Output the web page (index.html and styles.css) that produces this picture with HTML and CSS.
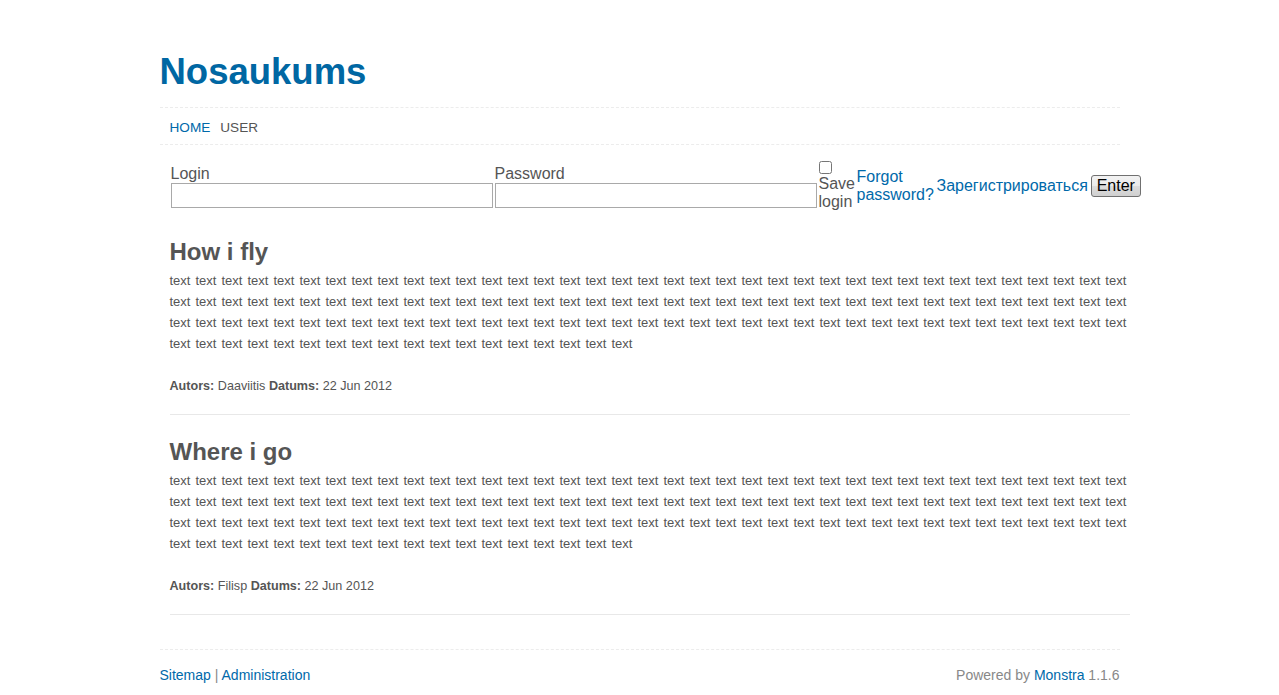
FILE: index.html
```html
<!doctype html>
<html>

	<head>
		<meta charset="UTF-8">
		<title>Nosaukums</title>
		<link rel="stylesheet" href="styles.css">
	</head>

	<body>
		<div class="wrap">
			<h1 class="logo"><a href="#">Nosaukums</a></h1>
			<ul class="nav">
				<li><a href="#">HOME</a></li>
				<li class="current">USER</li>
			</ul>

			<form class="login" action="#">
				<div class="field">
					<label>Login</label>
					<input type="text">
				</div>
				<div class="field">
					<label>Password</label>
					<input type="password">
				</div>
				<div class="remember">
					<input type="checkbox">
					Save login
				</div>
				<a class="forgot" href="#">Forgot password?</a>
				<a class="reg" href="#">Зарегистрироваться</a>
				<button type="button" class="btn">Enter</button>
			</form>

			<div class="content">
				<div class="post">
					<h2>How i fly</h2>
					<p>
						text text text text text text text text text text
						text text text text text text text text text text
						text text text text text text text text text text
						text text text text text text text text text text
						text text text text text text text text text text
						text text text text text text text text text text
						text text text text text text text text text text
						text text text text text text text text text text
						text text text text text text text text text text
						text text text text text text text text text text
						text text text text text text text text text text
						text text text text text text text text text text
						text text text text text text text text text
					</p>
					<div class="meta"><b>Autors:</b> Daaviitis <b>Datums:</b> 22 Jun 2012</div>
				</div>
				<div class="post">
					<h2>Where i go</h2>
					<p>
						text text text text text text text text text text
						text text text text text text text text text text
						text text text text text text text text text text
						text text text text text text text text text text
						text text text text text text text text text text
						text text text text text text text text text text
						text text text text text text text text text text
						text text text text text text text text text text
						text text text text text text text text text text
						text text text text text text text text text text
						text text text text text text text text text text
						text text text text text text text text text text
						text text text text text text text text text
					</p>
					<div class="meta"><b>Autors:</b> Filisp <b>Datums:</b> 22 Jun 2012</div>
				</div>
			</div>

			<div class="footer">
				<div class="links"><a href="#">Sitemap</a> | <a href="#">Administration</a></div>
				<div class="powered">Powered by <a href="#">Monstra</a> 1.1.6</div>
			</div>
		</div>
	</body>

</html>
```

FILE: styles.css
```css
* {
	margin: 0;
	padding: 0;
}

body {
	font-family: "Liberation Sans", Arial, sans-serif;
	color: #555;
	background: #fff;
}

a {
	color: #0069aa;
	text-decoration: none;
}

li {
	list-style: none;
}

.wrap {
	width: 960px;
	margin: 0 auto;
}

/* 头部 */
.logo {
	margin-top: 52px;
	font-size: 36.5px;
	line-height: 40px;
	font-weight: bold;
}

.logo a {
	color: #0067a3;
}

.nav {
	display: flex;
	gap: 10px;
	margin-top: 15px;
	padding: 11px 10px 7px;
	border-top: 1px dashed #ececec;
	border-bottom: 1px dashed #ececec;
	font-size: 13.6px;
	line-height: 18px;
}

.nav .current {
	color: #555;
}

/* 登录表单 */
.login {
	display: flex;
	align-items: center;
	gap: 2px;
	height: 54px;
	margin-top: 14px;
	padding-left: 11px;
	font-size: 16px;
	line-height: 18px;
	white-space: nowrap;
}

.login > * {
	flex-shrink: 0;
}

.field label {
	display: block;
	line-height: 19px;
}

.field input {
	display: block;
	width: 322px;
	height: 25px;
	box-sizing: border-box;
	border: 1px solid #a9a9a9;
	font-size: 13px;
	padding: 1px 2px;
}

.remember {
	width: 36px;
	white-space: normal;
}

.remember input {
	display: block;
	width: 13px;
	height: 13px;
	margin: 0 0 1px;
}

.forgot {
	width: 78px;
	white-space: normal;
}

.btn {
	width: 50px;
	height: 22px;
	margin-left: 1px;
	border: 1px solid #707070;
	border-radius: 3px;
	background: linear-gradient(#f2f2f2 0%, #ebebeb 50%, #dddddd 51%, #cfcfcf 100%);
	color: #000;
	font-family: "Liberation Sans", Arial, sans-serif;
	font-size: 16px;
	line-height: 18px;
}

/* 文章 */
.content {
	width: 960px;
	margin-left: 10px;
}

.post {
	padding-top: 23px;
	padding-bottom: 19px;
	border-bottom: 1px solid #e8e8e8;
}

.post:first-child {
	padding-top: 25px;
}

.post h2 {
	font-size: 24px;
	line-height: 28px;
	font-weight: bold;
	color: #555;
	margin-bottom: 4px;
}

.post p {
	font-size: 13px;
	line-height: 21px;
	word-spacing: 1.43px;
}

.meta {
	margin-top: 23px;
	font-size: 12.6px;
	line-height: 18px;
}

/* 底部 */
.footer {
	display: flex;
	justify-content: space-between;
	margin-top: 34px;
	padding-top: 16px;
	border-top: 1px dashed #ececec;
	font-size: 14px;
	line-height: 18px;
	color: #888;
}
```
